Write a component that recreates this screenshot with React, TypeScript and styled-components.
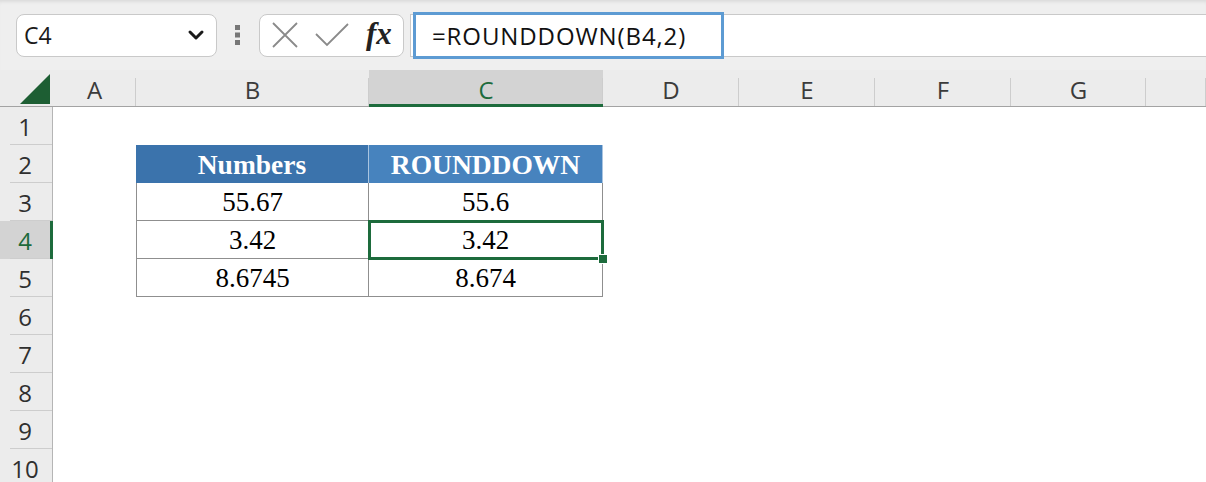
import React from "react";
import styled, { createGlobalStyle, css } from "styled-components";

const GlobalStyle = createGlobalStyle`
  body {
    margin: 0;
    background: #ffffff;
    overflow: hidden;
  }
`;

const Page = styled.div`
  width: 1206px;
  height: 482px;
  overflow: hidden;
  font-family: "Open Sans", "Noto Sans", sans-serif;
`;

const Toolbar = styled.div`
  height: 70px;
  background: #efefef;
  display: flex;
  align-items: center;
  padding-left: 16px;
  box-shadow: inset 0 4px 4px -3px rgba(0, 0, 0, 0.12);
`;

const NameBox = styled.div`
  width: 201px;
  height: 43px;
  box-sizing: border-box;
  background: #fff;
  border: 1px solid #c9c9c9;
  border-radius: 8px;
  display: flex;
  align-items: center;
  justify-content: space-between;
  padding: 0 11px 0 7px;
  font-size: 23px;
  color: #1a1a1a;
`;

const Dots = styled.div`
  width: 42px;
  display: flex;
  justify-content: center;
`;

const FxBox = styled.div`
  width: 145px;
  height: 43px;
  box-sizing: border-box;
  background: #fff;
  border: 1px solid #c9c9c9;
  border-radius: 8px;
  display: flex;
  align-items: center;
  padding: 0 8px 0 12px;
  gap: 17px;
`;

const Fx = styled.span`
  font-family: "Liberation Serif", "DejaVu Serif", serif;
  font-style: italic;
  font-weight: bold;
  font-size: 31px;
  line-height: 1;
  color: #222;
  margin-top: -3px;
`;

const FormulaInput = styled.div`
  flex: 1;
  height: 43px;
  box-sizing: border-box;
  margin-left: 6px;
  background: #fff;
  border-top: 1px solid #c9c9c9;
  border-bottom: 1px solid #c9c9c9;
  border-left: 1px solid #c9c9c9;
  display: flex;
  align-items: center;
`;

const Highlight = styled.div`
  flex: none;
  width: 311px;
  height: 47px;
  box-sizing: border-box;
  margin-left: 2px;
  border: 3px solid #5d9bd3;
  display: flex;
  align-items: center;
  padding-left: 16px;
  font-size: 24px;
  letter-spacing: 0.9px;
  color: #111;
`;

const Sheet = styled.div`
  display: grid;
  grid-template-columns: 53px 83px 233px 234px 136px 136px 136px 135px 1fr;
  grid-template-rows: 37px repeat(10, 38px);
`;

const Corner = styled.div`
  background: #ececec;
  border-bottom: 1px solid #a3a3a3;
  box-sizing: border-box;
`;

const ColHeader = styled.div<{ $selected?: boolean }>`
  position: relative;
  box-sizing: border-box;
  background: ${(p) => (p.$selected ? "#d3d3d3" : "#ececec")};
  border-bottom: ${(p) => (p.$selected ? "3px solid #1d6b3c" : "1px solid #a3a3a3")};
  color: ${(p) => (p.$selected ? "#1d6b3c" : "#3b3b3b")};
  display: flex;
  align-items: center;
  justify-content: center;
  padding-top: ${(p) => (p.$selected ? "4px" : "2px")};
  font-size: 24px;
  &::after {
    content: "";
    position: absolute;
    right: 0;
    bottom: 0;
    top: 8px;
    width: 1px;
    background: #cdcdcd;
  }
`;

const RowHeader = styled.div<{ $selected?: boolean }>`
  position: relative;
  box-sizing: border-box;
  background: ${(p) => (p.$selected ? "#d3d3d3" : "#ececec")};
  border-right: ${(p) => (p.$selected ? "3px solid #1d6b3c" : "1px solid #b5b5b5")};
  color: ${(p) => (p.$selected ? "#1d6b3c" : "#2f2f2f")};
  display: flex;
  align-items: center;
  justify-content: center;
  padding-right: ${(p) => (p.$selected ? "0" : "2px")};
  font-size: 24px;
  &::after {
    content: "";
    position: absolute;
    left: 10px;
    right: 0;
    bottom: 0;
    height: 1px;
    background: #cdcdcd;
  }
`;

const Cell = styled.div<{ $kind?: "head" | "data"; $first?: boolean; $selected?: boolean; $tone?: string }>`
  position: relative;
  box-sizing: border-box;
  background: #fff;
  display: flex;
  align-items: center;
  justify-content: center;
  font-family: "Liberation Serif", "Times New Roman", serif;
  ${(p) =>
    p.$kind === "head" &&
    css`
      background: ${p.$tone};
      color: #fff;
      font-weight: bold;
      font-size: 27.5px;
      border-right: 1px solid #a9c4e0;
      padding-top: 1px;
    `}
  ${(p) =>
    p.$kind === "data" &&
    css`
      color: #000;
      font-size: 27px;
      border-right: 1px solid #8f8f8f;
      border-bottom: 1px solid #8f8f8f;
      border-left: ${p.$first ? "1px solid #8f8f8f" : "none"};
      padding-top: 2px;
    `}
  ${(p) =>
    p.$selected &&
    css`
      outline: 3px solid #1d6b3c;
      outline-offset: -2px;
      z-index: 1;
      &::after {
        content: "";
        position: absolute;
        right: -6px;
        bottom: -6px;
        width: 8px;
        height: 8px;
        background: #1d6b3c;
        border: 1px solid #fff;
      }
    `}
`;

const Blank = styled.div``;

const ChevronIcon = () => (
  <svg width="18" height="12" viewBox="0 0 18 12">
    <path d="M3 3 L9 9 L15 3" fill="none" stroke="#1a1a1a" strokeWidth="3" strokeLinecap="round" strokeLinejoin="round" />
  </svg>
);

const DotsIcon = () => (
  <svg width="6" height="20" viewBox="0 0 6 20">
    <rect x="0" y="0" width="5" height="5" fill="#777" />
    <rect x="0" y="7.5" width="5" height="5" fill="#777" />
    <rect x="0" y="15" width="5" height="5" fill="#777" />
  </svg>
);

const CancelIcon = () => (
  <svg width="26" height="26" viewBox="0 0 26 26">
    <path d="M1 1 L25 25 M25 1 L1 25" stroke="#8a8a8a" strokeWidth="1.8" fill="none" />
  </svg>
);

const EnterIcon = () => (
  <svg width="34" height="24" viewBox="0 0 34 24">
    <path d="M1 11 L12 22 L33 1" stroke="#8a8a8a" strokeWidth="1.8" fill="none" />
  </svg>
);

const CornerTriangle = () => (
  <svg width="53" height="36" viewBox="0 0 53 36">
    <polygon points="20,34 50,4 50,34" fill="#1d5e33" />
  </svg>
);

const columns = ["A", "B", "C", "D", "E", "F", "G", ""];

const tableRows: Record<number, [string, string]> = {
  3: ["55.67", "55.6"],
  4: ["3.42", "3.42"],
  5: ["8.6745", "8.674"],
};

export default function App() {
  const rows = Array.from({ length: 10 }, (_, i) => i + 1);

  return (
    <Page>
      <GlobalStyle />
      <Toolbar>
        <NameBox>
          <span>C4</span>
          <ChevronIcon />
        </NameBox>
        <Dots>
          <DotsIcon />
        </Dots>
        <FxBox>
          <CancelIcon />
          <EnterIcon />
          <Fx>fx</Fx>
        </FxBox>
        <FormulaInput>
          <Highlight>=ROUNDDOWN(B4,2)</Highlight>
        </FormulaInput>
      </Toolbar>

      <Sheet>
        <Corner>
          <CornerTriangle />
        </Corner>
        {columns.map((c, i) => (
          <ColHeader key={i} $selected={c === "C"}>
            {c}
          </ColHeader>
        ))}

        {rows.map((r) => (
          <React.Fragment key={r}>
            <RowHeader $selected={r === 4}>{r}</RowHeader>
            <Blank />
            {r === 2 ? (
              <>
                <Cell $kind="head" $tone="#3b73ac">Numbers</Cell>
                <Cell $kind="head" $tone="#4783be">ROUNDDOWN</Cell>
              </>
            ) : tableRows[r] ? (
              <>
                <Cell $kind="data" $first>{tableRows[r][0]}</Cell>
                <Cell $kind="data" $selected={r === 4}>{tableRows[r][1]}</Cell>
              </>
            ) : (
              <>
                <Blank />
                <Blank />
              </>
            )}
            <Blank />
            <Blank />
            <Blank />
            <Blank />
            <Blank />
          </React.Fragment>
        ))}
      </Sheet>
    </Page>
  );
}
